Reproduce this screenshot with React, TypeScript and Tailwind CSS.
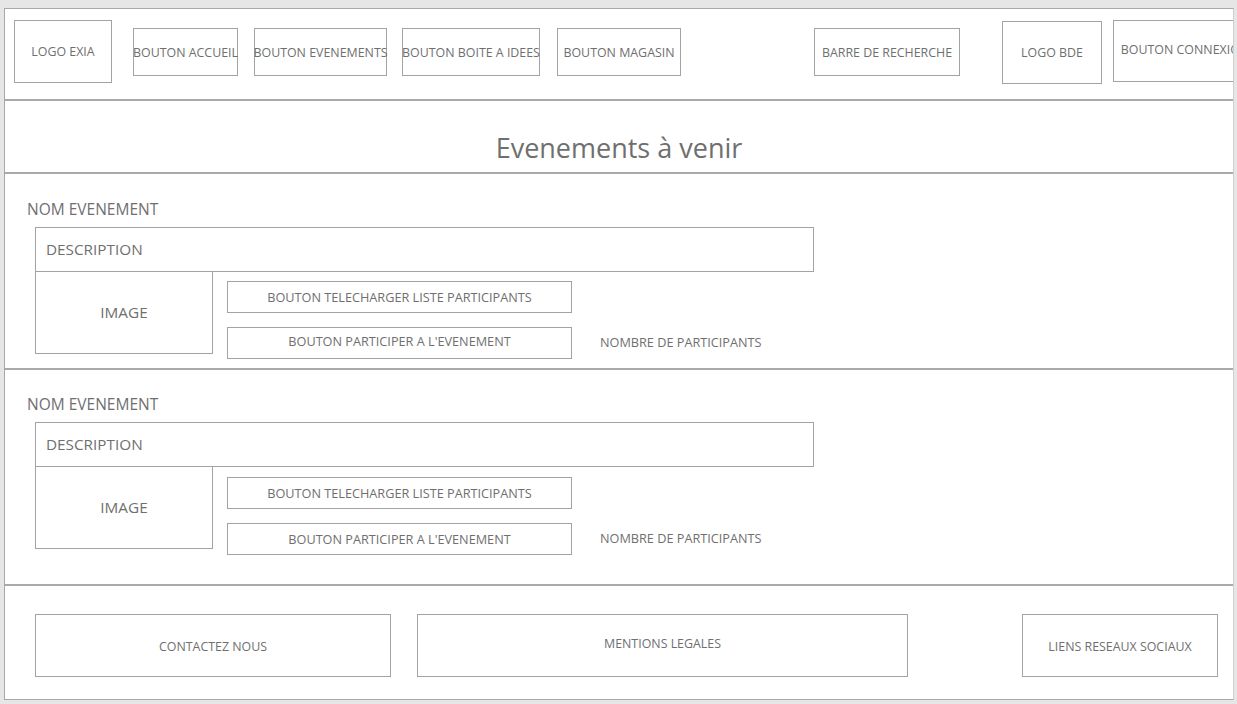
import React from 'react';

const font = { fontFamily: '"Open Sans", "Noto Sans", sans-serif' };

type Ev = { top: string; height: string; gap: string; b2: string };

const events: Ev[] = [
  { top: 'pt-[27px]', height: 'h-[196px]', gap: 'mt-[9px]', b2: 'pb-[3px]' },
  { top: 'pt-[26px]', height: 'h-[216px]', gap: 'mt-[10px]', b2: 'pt-[2px]' },
];

const EventBlock: React.FC<{ ev: Ev }> = ({ ev }) => (
  <section className={`${ev.height} ${ev.top} border-b-2 border-[#a9a9a9]`}>
    <p className="ml-[22px] text-[15.5px] leading-[16px]">NOM EVENEMENT</p>
    <div className="ml-[30px] mt-[10px] flex h-[45px] w-[779px] items-center border border-[#a3a3a3] pl-[10px] text-[15.3px]">
      DESCRIPTION
    </div>
    <div className="ml-[30px] flex">
      <div className="flex h-[82px] w-[178px] items-center justify-center border border-t-0 border-[#a3a3a3] text-[15.3px]">
        IMAGE
      </div>
      <div className="ml-[14px] flex flex-col">
        <div className={`${ev.gap} flex h-[32px] w-[345px] items-center justify-center border border-[#a3a3a3] pt-[2px] text-[12.7px]`}>
          BOUTON TELECHARGER LISTE PARTICIPANTS
        </div>
        <div className="mt-[14px] flex items-center">
          <div className={`${ev.b2} flex h-[32px] w-[345px] items-center justify-center border border-[#a3a3a3] text-[12.7px]`}>
            BOUTON PARTICIPER A L'EVENEMENT
          </div>
          <span className="ml-[28px] text-[12.7px]">NOMBRE DE PARTICIPANTS</span>
        </div>
      </div>
    </div>
  </section>
);

const navItems = [
  { label: 'LOGO EXIA', cls: 'ml-[9px] w-[98px] h-[63px] pt-[2px]' },
  { label: 'BOUTON ACCUEIL', cls: 'ml-[21px] w-[105px] h-[48px] mt-[2px] pt-[2px]' },
  { label: 'BOUTON EVENEMENTS', cls: 'ml-[16px] w-[133px] h-[48px] mt-[2px] pt-[2px]' },
  { label: 'BOUTON BOITE A IDEES', cls: 'ml-[15px] w-[138px] h-[48px] mt-[2px] pt-[2px]' },
  { label: 'BOUTON MAGASIN', cls: 'ml-[17px] w-[124px] h-[48px] mt-[2px] pt-[2px]' },
  { label: 'BARRE DE RECHERCHE', cls: 'ml-[133px] w-[146px] h-[48px] mt-[2px] pt-[2px]' },
  { label: 'LOGO BDE', cls: 'ml-[42px] w-[100px] h-[63px] mt-[2px] pt-[2px]' },
  { label: 'BOUTON CONNEXION', cls: 'ml-[11px] w-[144px] h-[62px] pb-[2px]' },
];

export default function App() {
  return (
    <div className="h-[704px] w-[1237px] bg-[#e6e6e6] pl-[4px] pt-[8px] text-[#6f6f6f]" style={font}>
      <div className="h-[692px] w-[1230px] overflow-hidden border border-[#a8a8a8] border-r-[#d0d0d0] bg-white">
        <header className="flex h-[92px] items-center border-b-2 border-[#a9a9a9] pb-[6px]">
          {navItems.map((n) => (
            <div
              key={n.label}
              className={`${n.cls} flex shrink-0 items-center justify-center whitespace-nowrap border border-[#a3a3a3] text-[12.4px]`}
            >
              {n.label}
            </div>
          ))}
        </header>

        <div className="flex h-[73px] items-end justify-center border-b-2 border-[#a9a9a9] pb-[8px]">
          <h1 className="text-[27px] leading-[32px]">Evenements à venir</h1>
        </div>

        {events.map((ev, i) => (
          <EventBlock key={i} ev={ev} />
        ))}

        <footer className="flex pt-[28px] text-[12.4px]">
          <div className="ml-[30px] flex h-[63px] w-[356px] items-center justify-center border border-[#a3a3a3] pt-[3px]">
            CONTACTEZ NOUS
          </div>
          <div className="ml-[26px] flex h-[63px] w-[491px] items-center justify-center border border-[#a3a3a3] pb-[2px]">
            MENTIONS LEGALES
          </div>
          <div className="ml-[114px] flex h-[63px] w-[196px] items-center justify-center border border-[#a3a3a3] pt-[3px]">
            LIENS RESEAUX SOCIAUX
          </div>
        </footer>
      </div>
    </div>
  );
}
